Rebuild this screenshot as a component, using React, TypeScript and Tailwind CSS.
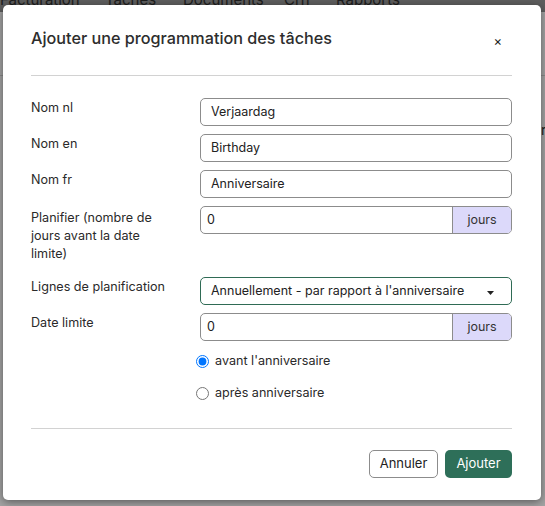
import React from "react";

const font = { fontFamily: "Inter, 'Noto Sans', sans-serif" };

function TextInput({ value }: { value: string }) {
  return (
    <div className="h-[28px] rounded-[5px] border border-[#8c8c8c] bg-white flex items-center pl-[10px] text-[12.5px] text-[#222]">
      {value}
    </div>
  );
}

function DaysInput({ value }: { value: string }) {
  return (
    <div className="h-[28px] rounded-[5px] border border-[#8c8c8c] bg-white flex overflow-hidden text-[12.5px] text-[#222]">
      <div className="flex-1 flex items-center pl-[6px]">{value}</div>
      <div className="w-[59px] bg-[#dcd9fa] border-l border-[#8c8c8c] flex items-center justify-center text-[#333]">
        jours
      </div>
    </div>
  );
}

function Label({ children }: { children: React.ReactNode }) {
  return <div className="text-[12.6px] leading-[18px] text-[#2a2a2a] pt-[1px] pr-[34px]">{children}</div>;
}

export default function App() {
  return (
    <div className="relative w-[545px] h-[506px] overflow-hidden bg-[#a3a3a3]" style={font}>
      {/* underlying page behind the backdrop */}
      <div className="absolute inset-0 flex flex-col">
        <div className="h-[12px] bg-[#5e5e5e] relative overflow-hidden">
          <div className="absolute left-[0px] top-[-11px] flex text-[15px] text-[#1d1d1d]">
            <span className="w-[105px]">Facturation</span>
            <span className="w-[78px]">Tâches</span>
            <span className="w-[101px]">Documents</span>
            <span className="w-[52px]">Crh</span>
            <span>Rapports</span>
          </div>
        </div>
        <div className="mt-[63px] h-px bg-[#8a8a8a]" />
        <div className="mt-[43px] flex justify-end text-[14px] text-[#1d1d1d]">
          <span className="mr-[-5px]">ri</span>
        </div>
      </div>

      {/* modal */}
      <div className="relative ml-[3px] mt-[5px] w-[538px] h-[495px] bg-white rounded-[5px] shadow-[0_2px_8px_rgba(0,0,0,0.45)] flex flex-col px-[28px]">
        <div className="pt-[21px] h-[50px] flex items-start justify-between">
          <div className="text-[16.2px] leading-[24px] font-medium text-[#2d2d2d]">
            Ajouter une programmation des tâches
          </div>
          <div className="text-[13px] leading-[14px] text-[#222] mr-[11px] mt-[8px]">×</div>
        </div>
        <div className="mr-[1px] border-t border-[#d2d2d2] mt-[20px]" />

        <div className="mt-[22px] mr-[1px] grid grid-cols-[169px_1fr] gap-y-[8px]">
          <Label>Nom nl</Label>
          <TextInput value="Verjaardag" />
          <Label>Nom en</Label>
          <TextInput value="Birthday" />
          <Label>Nom fr</Label>
          <TextInput value="Anniversaire" />
          <div className="text-[12.6px] leading-[18px] text-[#2a2a2a] pt-[3px] pr-[34px] pb-[6px]">
            Planifier (nombre de jours avant la date limite)
          </div>
          <DaysInput value="0" />
          <Label>Lignes de planification</Label>
          <div className="h-[28px] rounded-[5px] border border-[#2f6b55] bg-white flex items-center justify-between pl-[10px] pr-[17px] text-[12.5px] text-[#222]">
            <span>Annuellement - par rapport à l'anniversaire</span>
            <svg width="7" height="4" viewBox="0 0 7 4" className="mt-[4px]">
              <path d="M0 0 L7 0 L3.5 4 Z" fill="#222" />
            </svg>
          </div>
          <Label>Date limite</Label>
          <DaysInput value="0" />
          <div />
          <div className="flex flex-col gap-[12px] pt-[2px] -ml-[4px] text-[12.6px] text-[#2a2a2a]">
            <label className="h-[20px] flex items-center gap-[6px]">
              <input type="radio" name="when" defaultChecked className="m-0 w-[13px] h-[13px]" />
              <span>avant l'anniversaire</span>
            </label>
            <label className="h-[20px] flex items-center gap-[6px]">
              <input type="radio" name="when" className="m-0 w-[13px] h-[13px]" />
              <span>après anniversaire</span>
            </label>
          </div>
        </div>

        <div className="mr-[1px] border-t border-[#d2d2d2] mt-[25px]" />

        <div className="mt-[21px] mr-[1px] flex justify-end gap-[7px]">
          <button className="h-[28px] w-[69px] rounded-[5px] border border-[#8c8c8c] bg-white text-[13px] text-[#222]">
            Annuler
          </button>
          <button className="h-[28px] w-[67px] rounded-[5px] bg-[#2e6f59] text-[13px] text-white">
            Ajouter
          </button>
        </div>
      </div>
    </div>
  );
}
